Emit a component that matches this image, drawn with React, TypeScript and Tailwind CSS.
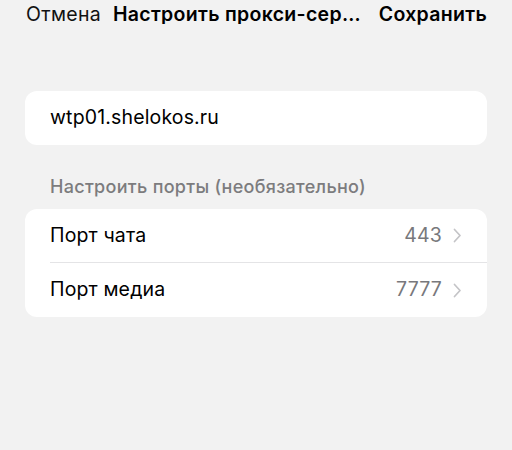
import React from 'react';

const PORTS = [
  { label: 'Порт чата', value: '443' },
  { label: 'Порт медиа', value: '7777' },
];

const Chevron: React.FC = () => (
  <svg width="9" height="15" viewBox="0 0 9 15" fill="none" className="ml-[11px]">
    <path d="M1.5 1.5 L7 7.5 L1.5 13.5" stroke="#c4c4c7" strokeWidth="1.7" strokeLinecap="round" strokeLinejoin="round" />
  </svg>
);

const App: React.FC = () => {
  return (
    <div className="w-[512px] h-[450px] bg-[#f2f2f2] text-black font-['Inter',sans-serif]">
      <div className="flex items-center h-[29px] pl-[26px] pr-[25px] text-[19.5px] tracking-[0.3px] leading-none">
        <span className="text-[#111]">Отмена</span>
        <span className="ml-[12px] w-[250px] font-semibold truncate">Настроить прокси-сервер</span>
        <span className="ml-auto font-semibold">Сохранить</span>
      </div>

      <div className="px-[25px] pt-[62px]">
        <div className="bg-white rounded-[12px] h-[54px] flex items-center pl-[25px] text-[19.5px] tracking-[0.15px]">
          wtp01.shelokos.ru
        </div>

        <div className="pl-[25px] pt-[33px] pb-[13px] text-[18px] tracking-[0.3px] font-medium text-[#7c7c7e] leading-none">
          Настроить порты (необязательно)
        </div>

        <div className="bg-white rounded-[12px]">
          {PORTS.map((p, i) => (
            <div key={p.label} className="pl-[25px]">
              <div
                className={`flex items-center h-[54px] pr-[25px] text-[19.5px] tracking-[0.15px] ${
                  i < PORTS.length - 1 ? 'border-b border-[#e4e4e6]' : ''
                }`}
              >
                <span>{p.label}</span>
                <span className="ml-auto text-[#78787c]">{p.value}</span>
                <Chevron />
              </div>
            </div>
          ))}
        </div>
      </div>
    </div>
  );
};

export default App;
